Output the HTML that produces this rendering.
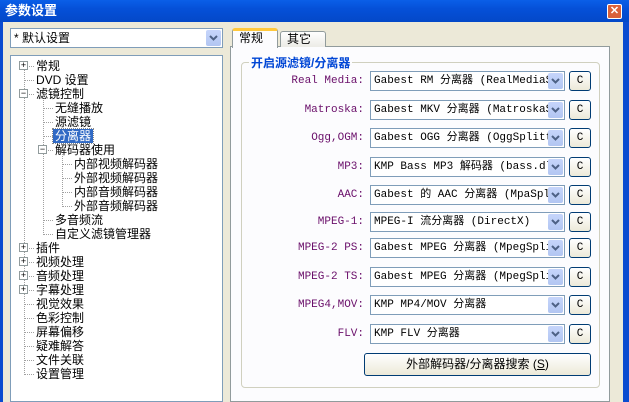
<!DOCTYPE html>
<html><head><meta charset="utf-8"><style>
*{margin:0;padding:0;box-sizing:border-box}
body{width:629px;height:402px;overflow:hidden;background:#ece9d8;position:relative;font-family:"Liberation Sans","Noto Sans CJK SC",sans-serif;font-size:12px;color:#000}
.a{position:absolute}
.title{left:0;top:0;width:629px;height:22px;background:linear-gradient(#0a5fe8,#0550d8 40%,#0348c8);color:#fff;font-weight:bold;font-size:13px;line-height:22px;padding-left:5px}
.close{left:607px;top:4px;width:15px;height:15px;background:#d9613a;border:1px solid #fff;border-radius:2px;color:#fff;font-size:11px;line-height:12px;text-align:center;font-weight:bold}
.lb{left:0;top:22px;width:3px;height:380px;background:#0a4bd0}
.rb{left:623px;top:22px;width:6px;height:380px;background:#0a4bd0}
.combo{background:#fff;border:1px solid #7f9db9;height:20px;font-family:"Liberation Mono","Noto Sans CJK SC",monospace;font-size:11px;line-height:18px;padding-left:3px;white-space:nowrap;overflow:hidden}
.arr{position:absolute;right:1px;top:1px;width:15px;height:16px;background:linear-gradient(#c6d5fb,#b2c6f2);border-radius:2px}
.arr svg{position:absolute;left:3px;top:5px}
.tree{left:10px;top:55px;width:213px;height:347px;background:#fff;border:1px solid #7f9db9}
.ti{position:absolute;font-size:12px;line-height:14px;white-space:nowrap}
.pm{position:absolute;width:9px;height:9px;border:1px solid #919b9c;background:#fff;font-size:9px;line-height:7px;text-align:center;color:#000;z-index:2}
.v{position:absolute;border-left:1px dotted #a0a0a0;width:0}
.h{position:absolute;border-top:1px dotted #a0a0a0;height:0}
.lbl{position:absolute;width:130px;text-align:right;color:#6a0f6a;font-family:"Liberation Mono",monospace;font-size:11px}
.btn{position:absolute;width:22px;height:20px;border:1px solid #003c74;border-radius:3px;background:linear-gradient(#fff,#ece9d8);font-family:"Liberation Mono",monospace;font-size:11px;line-height:18px;text-align:center}
</style></head><body>
<div class="a title">参数设置</div>
<div class="a close">✕</div>
<div class="a lb"></div><div class="a rb"></div>
<div class="a combo" style="left:10px;top:28px;width:213px;font-family:'Liberation Sans','Noto Sans CJK SC',sans-serif;font-size:12px">* 默认设置<span class="arr"><svg width="9" height="6"><path d="M1 1L4.5 4.5L8 1" stroke="#4d6185" stroke-width="2" fill="none"/></svg></span></div>
<div class="a tree">
<div class="v" style="left:13px;top:10px;height:309px"></div>
<div class="v" style="left:32px;top:38px;height:141px"></div>
<div class="v" style="left:51px;top:94px;height:57px"></div>
<div class="h" style="left:13px;top:10px;width:10px"></div>
<div class="h" style="left:13px;top:24px;width:10px"></div>
<div class="h" style="left:13px;top:38px;width:10px"></div>
<div class="h" style="left:32px;top:52px;width:10px"></div>
<div class="h" style="left:32px;top:66px;width:10px"></div>
<div class="h" style="left:32px;top:80px;width:10px"></div>
<div class="h" style="left:32px;top:94px;width:10px"></div>
<div class="h" style="left:51px;top:108px;width:10px"></div>
<div class="h" style="left:51px;top:122px;width:10px"></div>
<div class="h" style="left:51px;top:136px;width:10px"></div>
<div class="h" style="left:51px;top:150px;width:10px"></div>
<div class="h" style="left:32px;top:164px;width:10px"></div>
<div class="h" style="left:32px;top:178px;width:10px"></div>
<div class="h" style="left:13px;top:192px;width:10px"></div>
<div class="h" style="left:13px;top:206px;width:10px"></div>
<div class="h" style="left:13px;top:220px;width:10px"></div>
<div class="h" style="left:13px;top:234px;width:10px"></div>
<div class="h" style="left:13px;top:248px;width:10px"></div>
<div class="h" style="left:13px;top:262px;width:10px"></div>
<div class="h" style="left:13px;top:276px;width:10px"></div>
<div class="h" style="left:13px;top:290px;width:10px"></div>
<div class="h" style="left:13px;top:304px;width:10px"></div>
<div class="h" style="left:13px;top:318px;width:10px"></div>
<div class="pm" style="left:8px;top:5px">+</div><div class="ti" style="left:25px;top:3px">常规</div>
<div class="ti" style="left:25px;top:17px">DVD 设置</div>
<div class="pm" style="left:8px;top:33px">−</div><div class="ti" style="left:25px;top:31px">滤镜控制</div>
<div class="ti" style="left:44px;top:45px">无缝播放</div>
<div class="ti" style="left:44px;top:59px">源滤镜</div>
<div class="ti" style="left:42px;top:73px;background:#316ac5;color:#fff;padding:0 2px;outline:1px dotted #888">分离器</div>
<div class="pm" style="left:27px;top:89px">−</div><div class="ti" style="left:44px;top:87px">解码器使用</div>
<div class="ti" style="left:63px;top:101px">内部视频解码器</div>
<div class="ti" style="left:63px;top:115px">外部视频解码器</div>
<div class="ti" style="left:63px;top:129px">内部音频解码器</div>
<div class="ti" style="left:63px;top:143px">外部音频解码器</div>
<div class="ti" style="left:44px;top:157px">多音频流</div>
<div class="ti" style="left:44px;top:171px">自定义滤镜管理器</div>
<div class="pm" style="left:8px;top:187px">+</div><div class="ti" style="left:25px;top:185px">插件</div>
<div class="pm" style="left:8px;top:201px">+</div><div class="ti" style="left:25px;top:199px">视频处理</div>
<div class="pm" style="left:8px;top:215px">+</div><div class="ti" style="left:25px;top:213px">音频处理</div>
<div class="pm" style="left:8px;top:229px">+</div><div class="ti" style="left:25px;top:227px">字幕处理</div>
<div class="ti" style="left:25px;top:241px">视觉效果</div>
<div class="ti" style="left:25px;top:255px">色彩控制</div>
<div class="ti" style="left:25px;top:269px">屏幕偏移</div>
<div class="ti" style="left:25px;top:283px">疑难解答</div>
<div class="ti" style="left:25px;top:297px">文件关联</div>
<div class="ti" style="left:25px;top:311px">设置管理</div>
</div>
<div class="a" style="left:230px;top:46px;width:380px;height:356px;background:#fcfcfe;border:1px solid #919b9c"></div>
<div class="a" style="left:232px;top:28px;width:46px;height:20px;background:#fcfcfe;border:1px solid #919b9c;border-bottom:none;border-top:3px solid #ffc83c;border-radius:3px 3px 0 0;padding-left:6px;line-height:15px">常规</div>
<div class="a" style="left:280px;top:31px;width:46px;height:16px;background:linear-gradient(#fff,#ecebe6);border:1px solid #919b9c;border-bottom:none;border-radius:3px 3px 0 0;padding-left:6px;line-height:15px">其它</div>
<div class="a" style="left:241px;top:62px;width:359px;height:326px;border:1px solid #d0d0bf;border-radius:4px"></div>
<div class="a" style="left:249px;top:54px;background:#fcfcfe;padding:0 2px;color:#0046d5;font-weight:bold;font-size:12px">开启源滤镜/分离器</div>
<div class="lbl" style="left:234px;top:75px">Real Media:</div>
<div class="lbl" style="left:234px;top:104px">Matroska:</div>
<div class="lbl" style="left:234px;top:132px">Ogg,OGM:</div>
<div class="lbl" style="left:234px;top:161px">MP3:</div>
<div class="lbl" style="left:234px;top:189px">AAC:</div>
<div class="lbl" style="left:234px;top:216px">MPEG-1:</div>
<div class="lbl" style="left:234px;top:242px">MPEG-2 PS:</div>
<div class="lbl" style="left:234px;top:271px">MPEG-2 TS:</div>
<div class="lbl" style="left:234px;top:299px">MPEG4,MOV:</div>
<div class="lbl" style="left:234px;top:328px">FLV:</div>
<div class="a combo" style="left:370px;top:71px;width:195px">Gabest RM 分离器 (RealMediaS;<span class="arr"><svg width="9" height="6"><path d="M1 1L4.5 4.5L8 1" stroke="#4d6185" stroke-width="2" fill="none"/></svg></span></div>
<div class="a combo" style="left:370px;top:100px;width:195px">Gabest MKV 分离器 (MatroskaS;<span class="arr"><svg width="9" height="6"><path d="M1 1L4.5 4.5L8 1" stroke="#4d6185" stroke-width="2" fill="none"/></svg></span></div>
<div class="a combo" style="left:370px;top:128px;width:195px">Gabest OGG 分离器 (OggSplitt<span class="arr"><svg width="9" height="6"><path d="M1 1L4.5 4.5L8 1" stroke="#4d6185" stroke-width="2" fill="none"/></svg></span></div>
<div class="a combo" style="left:370px;top:157px;width:195px">KMP Bass MP3 解码器 (bass.dl<span class="arr"><svg width="9" height="6"><path d="M1 1L4.5 4.5L8 1" stroke="#4d6185" stroke-width="2" fill="none"/></svg></span></div>
<div class="a combo" style="left:370px;top:185px;width:195px">Gabest 的 AAC 分离器 (MpaSpl<span class="arr"><svg width="9" height="6"><path d="M1 1L4.5 4.5L8 1" stroke="#4d6185" stroke-width="2" fill="none"/></svg></span></div>
<div class="a combo" style="left:370px;top:212px;width:195px">MPEG-I 流分离器 (DirectX)<span class="arr"><svg width="9" height="6"><path d="M1 1L4.5 4.5L8 1" stroke="#4d6185" stroke-width="2" fill="none"/></svg></span></div>
<div class="a combo" style="left:370px;top:238px;width:195px">Gabest MPEG 分离器 (MpegSpli<span class="arr"><svg width="9" height="6"><path d="M1 1L4.5 4.5L8 1" stroke="#4d6185" stroke-width="2" fill="none"/></svg></span></div>
<div class="a combo" style="left:370px;top:267px;width:195px">Gabest MPEG 分离器 (MpegSpli<span class="arr"><svg width="9" height="6"><path d="M1 1L4.5 4.5L8 1" stroke="#4d6185" stroke-width="2" fill="none"/></svg></span></div>
<div class="a combo" style="left:370px;top:295px;width:195px">KMP MP4/MOV 分离器<span class="arr"><svg width="9" height="6"><path d="M1 1L4.5 4.5L8 1" stroke="#4d6185" stroke-width="2" fill="none"/></svg></span></div>
<div class="a combo" style="left:370px;top:324px;width:195px">KMP FLV 分离器<span class="arr"><svg width="9" height="6"><path d="M1 1L4.5 4.5L8 1" stroke="#4d6185" stroke-width="2" fill="none"/></svg></span></div>
<div class="btn" style="left:569px;top:71px">C</div>
<div class="btn" style="left:569px;top:100px">C</div>
<div class="btn" style="left:569px;top:128px">C</div>
<div class="btn" style="left:569px;top:157px">C</div>
<div class="btn" style="left:569px;top:185px">C</div>
<div class="btn" style="left:569px;top:212px">C</div>
<div class="btn" style="left:569px;top:238px">C</div>
<div class="btn" style="left:569px;top:267px">C</div>
<div class="btn" style="left:569px;top:295px">C</div>
<div class="btn" style="left:569px;top:324px">C</div>
<div class="btn" style="left:364px;top:353px;width:227px;height:23px;line-height:21px;font-family:'Liberation Sans','Noto Sans CJK SC',sans-serif;font-size:12px">外部解码器/分离器搜索 (<u>S</u>)</div>
</body></html>
